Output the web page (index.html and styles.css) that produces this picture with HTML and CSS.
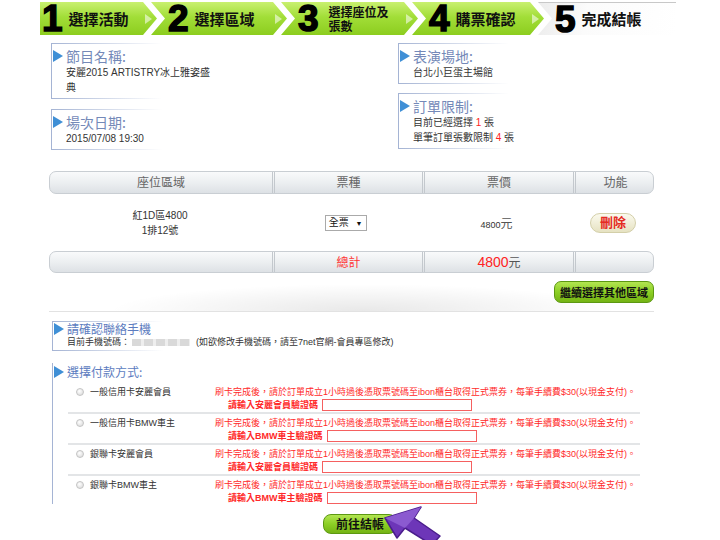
FILE: index.html
```html
<!DOCTYPE html>
<html lang="zh-Hant">
<head>
  <meta charset="UTF-8" />
  <title>完成結帳</title>
  <link rel="stylesheet" href="styles.css">
</head>
<body>
  <div class="page">
    <div class="steps">
      <div class="step step-1"><span class="num">1</span><span class="label">選擇活動</span></div>
      <div class="step step-2"><span class="num">2</span><span class="label">選擇區域</span></div>
      <div class="step step-3"><span class="num">3</span><span class="label label-small">選擇座位及<br>張數</span></div>
      <div class="step step-4"><span class="num">4</span><span class="label">購票確認</span></div>
      <div class="step step-5"><span class="num">5</span><span class="label">完成結帳</span></div>
    </div>

    <div class="info">
      <div class="info-col">
        <div class="box">
          <div class="box-title">節目名稱:</div>
          <div class="box-text wrap">安麗2015 ARTISTRY冰上雅姿盛典</div>
        </div>
        <div class="box">
          <div class="box-title">場次日期:</div>
          <div class="box-text">2015/07/08 19:30</div>
        </div>
      </div>
      <div class="info-col">
        <div class="box box-short">
          <div class="box-title">表演場地:</div>
          <div class="box-text">台北小巨蛋主場館</div>
        </div>
        <div class="box">
          <div class="box-title">訂單限制:</div>
          <div class="box-text">目前已經選擇 <b class="hot">1</b> 張</div>
          <div class="box-text">單筆訂單張數限制 <b class="hot">4</b> 張</div>
        </div>
      </div>
    </div>

    <div class="tickets">
      <div class="bar">
        <div class="cell">座位區域</div>
        <div class="cell">票種</div>
        <div class="cell">票價</div>
        <div class="cell">功能</div>
      </div>
      <div class="row">
        <div class="cell seat">紅1D區4800<br>1排12號</div>
        <div class="cell"><span class="select">全票 <i>▼</i></span></div>
        <div class="cell"><span class="price">4800</span><span class="yuan">元</span></div>
        <div class="cell"><span class="btn-delete">刪除</span></div>
      </div>
      <div class="bar">
        <div class="cell"></div>
        <div class="cell red">總計</div>
        <div class="cell"><span class="total">4800</span><span class="yuan">元</span></div>
        <div class="cell"></div>
      </div>
      <div class="more">
        <span class="btn-green">繼續選擇其他區域</span>
      </div>
    </div>

    <div class="box box-wide contact">
      <div class="sec-title">請確認聯絡手機</div>
      <div class="contact-line">目前手機號碼：<span class="blur"></span>(如欲修改手機號碼，請至7net官網-會員專區修改)</div>
    </div>

    <div class="box box-wide pay">
      <div class="sec-title">選擇付款方式:</div>
      <div class="pay-row">
        <div class="pay-opt"><span class="radio"></span>一般信用卡安麗會員</div>
        <div class="pay-note">
          <div>刷卡完成後，請於訂單成立1小時過後憑取票號碼至ibon櫃台取得正式票券，每筆手續費$30(以現金支付)。</div>
          <div class="code">請輸入安麗會員驗證碼<span class="code-input"></span></div>
        </div>
      </div>
      <div class="pay-row">
        <div class="pay-opt"><span class="radio"></span>一般信用卡BMW車主</div>
        <div class="pay-note">
          <div>刷卡完成後，請於訂單成立1小時過後憑取票號碼至ibon櫃台取得正式票券，每筆手續費$30(以現金支付)。</div>
          <div class="code">請輸入BMW車主驗證碼<span class="code-input"></span></div>
        </div>
      </div>
      <div class="pay-row">
        <div class="pay-opt"><span class="radio"></span>銀聯卡安麗會員</div>
        <div class="pay-note">
          <div>刷卡完成後，請於訂單成立1小時過後憑取票號碼至ibon櫃台取得正式票券，每筆手續費$30(以現金支付)。</div>
          <div class="code">請輸入安麗會員驗證碼<span class="code-input"></span></div>
        </div>
      </div>
      <div class="pay-row">
        <div class="pay-opt"><span class="radio"></span>銀聯卡BMW車主</div>
        <div class="pay-note">
          <div>刷卡完成後，請於訂單成立1小時過後憑取票號碼至ibon櫃台取得正式票券，每筆手續費$30(以現金支付)。</div>
          <div class="code">請輸入BMW車主驗證碼<span class="code-input"></span></div>
        </div>
      </div>
    </div>

    <div class="checkout">
      <span class="btn-green btn-go">前往結帳</span>
    </div>

    <svg class="pointer" width="64" height="44" viewBox="0 0 64 44">
      <polygon points="5,18 41,7 34,18 60,36 52,45 25,28 17,38" fill="#6d36b8" stroke="#4a1d8c" stroke-width="1.5" stroke-linejoin="round"/>
      <polygon points="5,18 41,7 34,18 25,28" fill="#8b5ad0"/>
    </svg>
  </div>
</body>
</html>
```

FILE: styles.css
```css
* {
  box-sizing: border-box;
}

html, body {
  margin: 0;
  padding: 0;
  background: #fff;
  overflow: hidden;
}

body {
  font-family: "Liberation Sans", "Noto Sans CJK TC", sans-serif;
  font-size: 10px;
  color: #333;
}

.page {
  position: relative;
  width: 720px;
  height: 540px;
  padding: 2px 0 0 40px;
}

/* step bar */
.steps {
  display: flex;
  width: 636px;
  height: 33px;
}

.step {
  position: relative;
  display: flex;
  align-items: center;
  flex-shrink: 0;
  height: 33px;
  margin-left: -6px;
  padding-left: 17px;
  background: linear-gradient(#c9f070, #a2de38 45%, #8ccd1f);
  clip-path: polygon(0 0, calc(100% - 14px) 0, 100% 50%, calc(100% - 14px) 100%, 0 100%, 14px 50%);
}

.step::after {
  content: "";
  position: absolute;
  right: 5px;
  top: 12px;
  border-left: 7px solid rgba(255, 255, 255, 0.55);
  border-top: 5px solid transparent;
  border-bottom: 5px solid transparent;
}

.step-1 {
  width: 117px;
  margin-left: 0;
  padding-left: 2px;
  clip-path: polygon(0 0, calc(100% - 14px) 0, 100% 50%, calc(100% - 14px) 100%, 0 100%);
}

.step-2 { width: 136px; }
.step-3 { width: 137px; }
.step-4 { width: 132px; }

.step-5 {
  width: 138px;
  border-top: 1px solid #c8c8c8;
  background: linear-gradient(100deg, #ececec, #fbfbfb 35%, #fff);
  clip-path: polygon(0 0, 100% 0, 100% 100%, 0 100%, 14px 50%);
}

.step-5::after {
  display: none;
}

.num {
  font: bold 37px/31px "Liberation Sans", sans-serif;
  color: #000;
  -webkit-text-stroke: 1.5px #000;
}

.label {
  margin-left: 6px;
  font-family: "Noto Sans CJK TC", sans-serif;
  font-weight: 700;
  font-size: 15px;
  line-height: 18px;
  color: #111;
}

.label-small {
  margin-left: 10px;
  font-size: 12px;
  line-height: 14px;
}

/* event info */
.info {
  display: flex;
  margin: 8px 0 0 11px;
}

.info-col {
  flex-shrink: 0;
  width: 347px;
}

.info-col + .info-col {
  width: 250px;
}

.box {
  width: 150px;
  margin-bottom: 10px;
  padding: 4px 0 4px 0;
  border-left: 1px solid #a5b4d4;
  background:
    linear-gradient(to right, #a5b4d4, rgba(165, 180, 212, 0)) left top / 110px 1px no-repeat,
    linear-gradient(to right, #a5b4d4, rgba(165, 180, 212, 0)) left bottom / 110px 1px no-repeat;
}

.box-short {
  margin-bottom: 9px;
}

.info-col .box:last-child {
  margin-bottom: 0;
}

.box-title,
.sec-title {
  display: flex;
  align-items: center;
  font-family: "Noto Sans CJK TC", sans-serif;
  font-size: 14px;
  line-height: 18px;
  color: #7489b8;
}

.box-title::before,
.sec-title::before {
  content: "";
  width: 0;
  height: 0;
  margin: 0 3px 0 1px;
  border-left: 10px solid #3f8fd6;
  border-top: 6px solid transparent;
  border-bottom: 6px solid transparent;
}

.box-text {
  padding-left: 14px;
  line-height: 15px;
  color: #333;
}

.box-text.wrap {
  width: 162px;
}

.hot {
  font-weight: normal;
  color: #f22;
}

/* ticket table */
.tickets {
  width: 605px;
  margin: 21px 0 0 9px;
}

.bar,
.row {
  display: grid;
  grid-template-columns: 222px 150px 151px 82px;
}

.bar {
  height: 22px;
  border: 1px solid #c9ced3;
  border-radius: 7px;
  background: linear-gradient(#f9fafb, #eceff1 50%, #dde1e5);
  font-family: "Noto Sans CJK TC", sans-serif;
  font-size: 12px;
  color: #666;
}

.bar:first-child {
  height: 23px;
}

.bar .cell {
  text-align: center;
  line-height: 20px;
}

.bar .cell + .cell {
  border-left: 3px double #c3c8cd;
}

.row {
  height: 57px;
  align-items: center;
}

.row .cell {
  text-align: center;
}

.seat {
  line-height: 15px;
}

.select {
  display: inline-block;
  padding: 0 4px 0 3px;
  border: 1px solid #aaa;
  line-height: 13px;
  font-size: 10px;
  color: #111;
}

.select i {
  font-style: normal;
  font-size: 7px;
  margin-left: 4px;
}

.price {
  font-size: 9px;
}

.yuan {
  font-size: 12px;
  color: #555;
}

.total {
  font: 14px "Liberation Sans", sans-serif;
  color: #f22;
}

.red {
  color: #f33;
}

.btn-delete {
  display: inline-block;
  width: 46px;
  height: 20px;
  border: 1px solid #d3cfa9;
  border-radius: 10px;
  background: linear-gradient(#fbfaee, #e6e2c2);
  font-weight: bold;
  font-size: 13px;
  line-height: 18px;
  color: #e52a22;
}

.more {
  display: flex;
  justify-content: flex-end;
  height: 31px;
  margin-top: 8px;
  border-bottom: 1px solid #e2e2e2;
  background: radial-gradient(ellipse 42% 90% at 52% 100%, rgba(0, 0, 0, 0.09), rgba(0, 0, 0, 0));
}

.btn-green {
  display: inline-block;
  height: 22px;
  padding: 0 5px;
  border: 1px solid #5c9812;
  border-radius: 7px;
  background: linear-gradient(#b2e551, #8ccf25 50%, #74b314);
  font-family: "Noto Sans CJK TC", sans-serif;
  font-weight: 700;
  font-size: 11px;
  line-height: 20px;
  color: #111;
}

/* contact + payment */
.box-wide {
  width: 600px;
  margin-left: 12px;
  padding: 1px 0 2px 0;
}

.contact {
  margin-top: 9px;
}

.contact .sec-title,
.pay .sec-title {
  font-size: 12px;
  line-height: 14px;
  color: #5c7cc0;
}

.contact-line {
  padding-left: 14px;
  font-size: 9px;
  line-height: 13px;
}

.blur {
  display: inline-block;
  width: 58px;
  height: 7px;
  margin: 0 6px 0 2px;
  vertical-align: -1px;
  background: repeating-linear-gradient(90deg, #d9d9d9 0 9px, #eeeeee 9px 12px);
}

.pay {
  margin-top: 12px;
  padding: 2px 0 0 0;
  background: none;
}

.pay .sec-title {
  margin-bottom: 4px;
}

.pay-row {
  display: flex;
  width: 572px;
  height: 31px;
  margin-left: 15px;
  padding-top: 3px;
  border-bottom: 2px solid #e3e5e7;
}

.pay-row:last-child {
  height: 28px;
  border-bottom: 0;
}

.pay-opt {
  display: flex;
  align-items: flex-start;
  width: 147px;
  font-size: 9px;
  line-height: 12px;
}

.radio {
  width: 8px;
  height: 8px;
  margin: 2px 6px 0 8px;
  border-radius: 50%;
  border: 1px solid #c4c4c4;
  background: radial-gradient(circle at 40% 35%, #fff, #d6d6d6);
}

.pay-note {
  font-size: 9px;
  line-height: 12px;
  color: #ff2a2a;
}

.code {
  display: flex;
  align-items: center;
  height: 13px;
  padding-left: 13px;
  font-weight: bold;
}

.code-input {
  width: 150px;
  height: 12px;
  margin-left: 4px;
  border: 1px solid #f56060;
}

.checkout {
  display: flex;
  justify-content: center;
  margin: 5px 0 0 -40px;
}

.btn-go {
  width: 74px;
  height: 20px;
  border-radius: 8px;
  font-size: 12px;
  line-height: 18px;
  text-align: center;
}

.pointer {
  position: absolute;
  left: 380px;
  top: 500px;
}
```
